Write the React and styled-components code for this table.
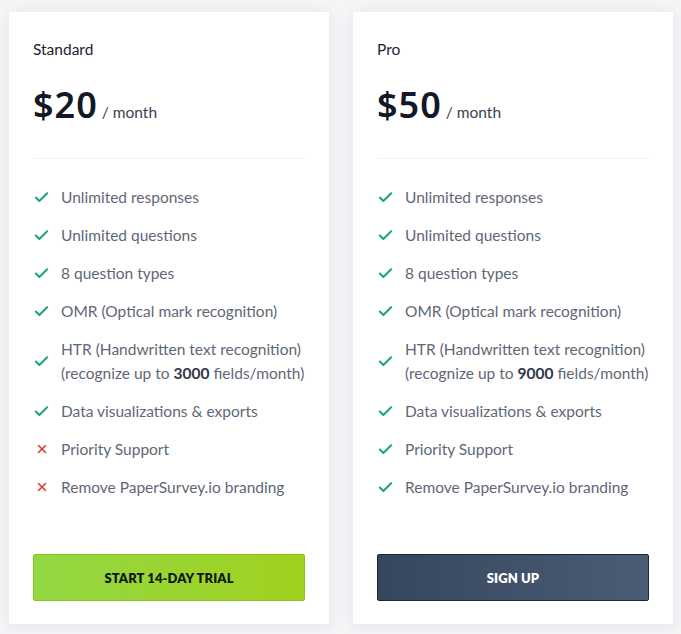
import React from 'react';
import styled, { createGlobalStyle } from 'styled-components';
import { Check, X } from 'lucide-react';

const GlobalStyle = createGlobalStyle`
  html, body {
    margin: 0;
    padding: 0;
    background: #f4f5f7;
    font-family: Lato, "Open Sans", sans-serif;
  }
`;

const plans = [
  {
    name: 'Standard',
    price: '$20',
    fields: '3000',
    missing: 2,
    cta: 'START 14-DAY TRIAL',
    variant: 'trial',
  },
  {
    name: 'Pro',
    price: '$50',
    fields: '9000',
    missing: 0,
    cta: 'SIGN UP',
    variant: 'signup',
  },
];

const features = (fields) => [
  'Unlimited responses',
  'Unlimited questions',
  '8 question types',
  'OMR (Optical mark recognition)',
  <>
    HTR (Handwritten text recognition)
    <br />
    (recognize up to <strong>{fields}</strong> fields/month)
  </>,
  'Data visualizations & exports',
  'Priority Support',
  'Remove PaperSurvey.io branding',
];

const App = () => {
  return (
    <>
      <GlobalStyle />
      <Page>
        {plans.map((plan) => {
          const list = features(plan.fields);
          return (
            <Card key={plan.name}>
              <PlanName>{plan.name}</PlanName>
              <PriceRow>
                <Price>{plan.price}</Price>
                <Period>/ month</Period>
              </PriceRow>
              <Divider />
              <FeatureList>
                {list.map((item, i) => {
                  const included = i < list.length - plan.missing;
                  return (
                    <Feature key={i}>
                      <Mark $included={included}>
                        {included ? (
                          <Check size={17} strokeWidth={2.7} />
                        ) : (
                          <X size={14} strokeWidth={2.5} />
                        )}
                      </Mark>
                      <FeatureText>{item}</FeatureText>
                    </Feature>
                  );
                })}
              </FeatureList>
              <Button $variant={plan.variant}>{plan.cta}</Button>
            </Card>
          );
        })}
      </Page>
    </>
  );
};

const Page = styled.div`
  display: grid;
  grid-template-columns: 320px 320px;
  gap: 24px;
  padding: 12px 8px 9px 9px;
`;

const Card = styled.div`
  background: #ffffff;
  box-shadow: 0 2px 16px rgba(30, 40, 60, 0.08);
  padding: 27px 24px 23px;
  display: flex;
  flex-direction: column;
`;

const PlanName = styled.div`
  font-size: 15.5px;
  line-height: 20px;
  color: #1d2330;
`;

const PriceRow = styled.div`
  display: flex;
  align-items: baseline;
  gap: 4px;
  margin-top: 26px;
`;

const Price = styled.span`
  font-family: "Noto Sans", sans-serif;
  font-weight: 600;
  font-size: 36px;
  line-height: 40px;
  letter-spacing: 1px;
  color: #121826;
`;

const Period = styled.span`
  font-size: 15.5px;
  color: #3b4352;
`;

const Divider = styled.hr`
  border: 0;
  border-top: 1px solid #eff1f4;
  margin: 33px 0 0;
`;

const FeatureList = styled.ul`
  list-style: none;
  margin: 26px 0 0;
  padding: 0;
  display: flex;
  flex-direction: column;
  gap: 14px;
`;

const Feature = styled.li`
  display: flex;
  align-items: center;
  gap: 11px;
`;

const Mark = styled.span`
  width: 17px;
  display: flex;
  justify-content: center;
  color: ${(p) => (p.$included ? '#13a37c' : '#e0352b')};
`;

const FeatureText = styled.span`
  font-size: 15.5px;
  line-height: 24px;
  color: #5f6776;

  strong {
    color: #2e3645;
    font-weight: 700;
  }
`;

const Button = styled.button`
  margin-top: 55px;
  height: 47px;
  border-radius: 2px;
  font-family: Lato, sans-serif;
  font-weight: 800;
  font-size: 13px;
  letter-spacing: 0.1px;
  cursor: pointer;
  border: 1px solid
    ${(p) => (p.$variant === 'trial' ? '#86c31f' : '#1b2636')};
  background: ${(p) =>
    p.$variant === 'trial'
      ? 'linear-gradient(90deg, #93d844, #a1d11f)'
      : 'linear-gradient(90deg, #36465c, #4a5d75)'};
  color: ${(p) => (p.$variant === 'trial' ? '#111a10' : '#ffffff')};
`;

export default App;
